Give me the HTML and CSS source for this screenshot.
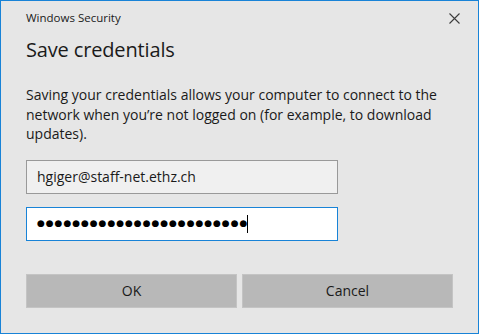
FILE: index.html
```html
<!DOCTYPE html>
<html>
<head>
<meta charset="utf-8">
<link rel="stylesheet" href="styles.css">
</head>
<body>
<div class="dialog">
  <div class="titlebar">
    <span class="title">Windows Security</span>
    <span class="close" aria-label="Close">
      <svg width="11" height="11" viewBox="0 0 11 11"><path d="M0.5 0.5 L10.5 10.5 M10.5 0.5 L0.5 10.5" stroke="#3c3c3c" stroke-width="1.1" fill="none"/></svg>
    </span>
  </div>
  <div class="content">
    <h1 class="heading">Save credentials</h1>
    <p class="desc">Saving your credentials allows your computer to connect to the network when you’re not logged on (for example, to download updates).</p>
    <div class="fields">
      <div class="field field-user">hgiger@staff-net.ethz.ch</div>
      <div class="field field-pass"><span class="dots">●●●●●●●●●●●●●●●●●●●●●●●●</span><span class="caret"></span></div>
    </div>
    <div class="buttons">
      <button class="btn">OK</button>
      <button class="btn">Cancel</button>
    </div>
  </div>
</div>
</body>
</html>
```
FILE: styles.css
```css
* { box-sizing: border-box; }
html, body { margin: 0; padding: 0; }
body {
  width: 479px;
  height: 334px;
  overflow: hidden;
  font-family: "Segoe UI", "Open Sans", "Noto Sans", sans-serif;
  color: #000;
  background: #e6e6e6;
}
.dialog {
  width: 479px;
  height: 334px;
  border: 1px solid #1883d7;
  background: #e6e6e6;
  display: flex;
  flex-direction: column;
}
.titlebar {
  height: 34px;
  display: flex;
  align-items: center;
  justify-content: space-between;
  padding: 0 18px 0 25px;
}
.title {
  font-size: 11.5px;
  color: #1a1a1a;
  padding-bottom: 1px;
}
.close {
  display: flex;
  width: 11px;
  height: 11px;
}
.content {
  padding: 0 25px 0 25px;
  display: flex;
  flex-direction: column;
}
.heading {
  margin: 1px 0 0 0;
  font-size: 20px;
  font-weight: 400;
  line-height: 28px;
  color: #1a1a1a;
  letter-spacing: -0.15px;
}
.desc {
  margin: 21px 0 0 0;
  font-size: 14px;
  line-height: 19.5px;
  color: #1a1a1a;
}
.fields {
  margin-top: 16px;
  display: flex;
  flex-direction: column;
  gap: 13px;
}
.field {
  width: 312px;
  height: 34px;
  display: flex;
  align-items: center;
  padding-left: 10px;
  font-size: 14px;
}
.field-user {
  background: #f0f0f0;
  border: 1px solid #999999;
  color: #1a1a1a;
}
.field-pass {
  background: #ffffff;
  border: 1px solid #1883d7;
}
.dots {
  font-family: "DejaVu Sans", sans-serif;
  font-size: 9px;
  letter-spacing: 0.95px;
  color: #000;
  line-height: 1;
}
.caret {
  width: 1px;
  height: 18px;
  background: #000;
  margin-left: -1px;
}
.buttons {
  margin-top: 33px;
  display: grid;
  grid-template-columns: 211px 211px;
  gap: 5px;
}
.btn {
  height: 34px;
  background: #b8b8b8;
  border: 1px solid #c4c4c4;
  font-family: inherit;
  font-size: 14px;
  color: #1a1a1a;
  padding: 0;
}
```
